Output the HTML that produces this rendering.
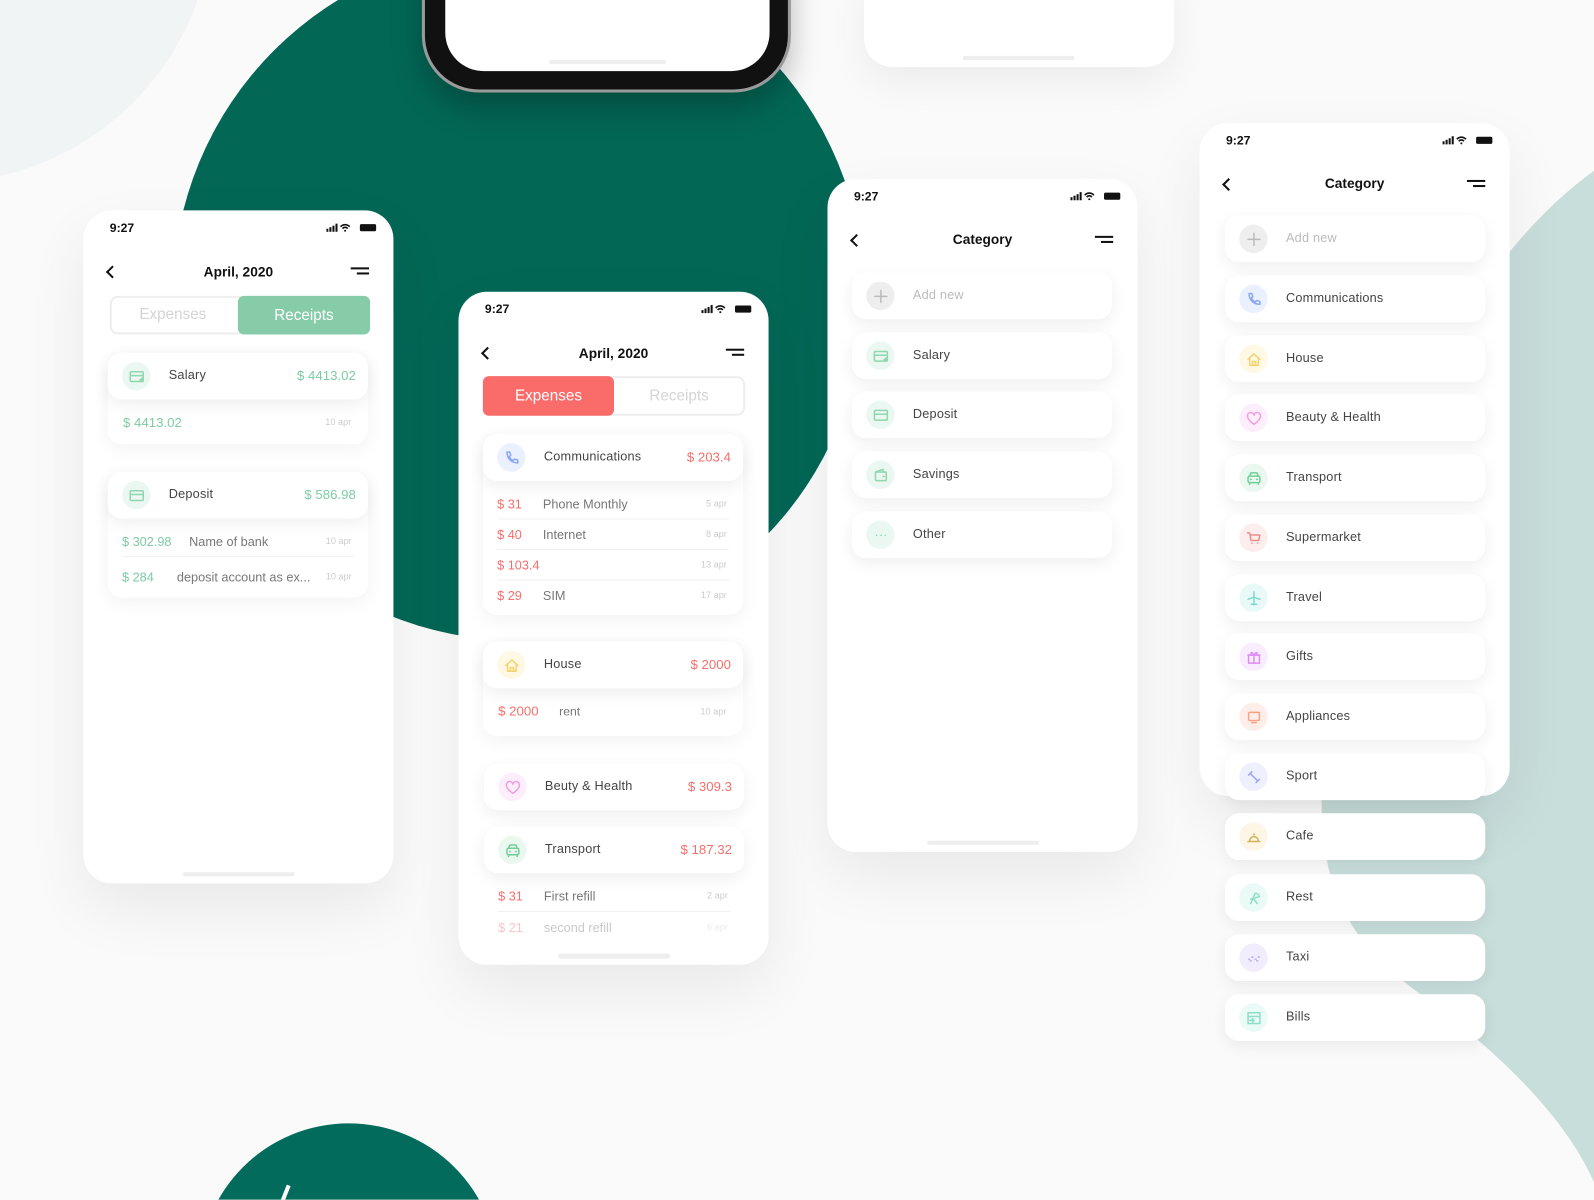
<!DOCTYPE html>
<html><head><meta charset="utf-8"><style>
*{margin:0;padding:0;box-sizing:border-box}
html,body{width:1594px;height:1200px;overflow:hidden;background:#fafafa}
#w{position:absolute;left:0;top:0;width:1568px;height:1180px;overflow:hidden;transform:scale(1.0166);transform-origin:0 0;font-family:"Liberation Sans",sans-serif;color:#444}
.a{position:absolute}
.ph{position:absolute;width:305px;height:662px;background:#fff;border-radius:28px;box-shadow:0 25px 60px rgba(0,0,0,.07)}
.tm{position:absolute;left:26px;top:10px;font-size:12px;font-weight:bold;color:#111}
.st{position:absolute;right:14px;top:12px}
.ttl{position:absolute;left:0;width:305px;text-align:center;font-size:13.5px;font-weight:bold;color:#111}
.bk{position:absolute;left:24px;width:9px;height:9px;border-left:2px solid #111;border-bottom:2px solid #111;transform:rotate(45deg)}
.mn{position:absolute;right:24px;width:18px;height:8px}
.mn:before{content:"";position:absolute;left:0;top:0;width:18px;height:2px;background:#111}
.mn:after{content:"";position:absolute;right:0;top:5px;width:12px;height:2px;background:#111}
.hb{position:absolute;left:98px;bottom:7px;width:110px;height:4px;border-radius:2px;background:#eee}
.cd{position:absolute;width:256px;height:46px;background:#fff;border-radius:14px;box-shadow:0 5px 16px rgba(0,0,0,.065)}
.box{position:absolute;width:256px;background:#fff;border-radius:14px;box-shadow:0 5px 18px rgba(0,0,0,.05)}
.ic{position:absolute;left:14px;top:9px;width:28px;height:28px;border-radius:50%;display:flex;align-items:center;justify-content:center}
.ic svg{width:17px;height:17px;fill:none;stroke-width:1.4;stroke-linecap:round;stroke-linejoin:round}
.lb{position:absolute;left:60px;top:15px;font-size:12.5px;color:#444;letter-spacing:.2px}
.am{position:absolute;right:12px;top:15px;font-size:13px}
.g{color:#7dcba3}.r{color:#f46f6c}
.row{position:absolute;left:14px;right:14px;height:30px;font-size:12.5px;border-bottom:1px solid #f0f0f0}
.row .v{position:absolute;left:0;top:8px}
.row .n{position:absolute;top:8px;color:#777}
.row .d{position:absolute;right:2px;top:9px;font-size:9px;color:#ccc}
</style></head><body><div id="w">
<svg class="a" style="left:0;top:0" width="1568" height="1180">
<circle cx="-60" cy="-90" r="270" fill="#f1f4f4"/>
<circle cx="510" cy="290" r="340" fill="#036756"/>
<path d="M1568,168 C1440,260 1320,480 1300,786 C1300,880 1330,930 1400,980 C1480,1040 1540,1100 1568,1163 Z" fill="#c8dedb"/>
<circle cx="343" cy="1252" r="147" fill="#036b5b"/>
<line x1="284" y1="1166" x2="278" y2="1181" stroke="#fff" stroke-width="4"/>
</svg>
<div class="a" style="left:415px;top:-40px;width:363px;height:131px;background:#111;border-radius:0 0 56px 56px;border:3px solid #9a9a9a;box-shadow:0 15px 30px rgba(0,0,0,.25)"></div>
<div class="a" style="left:438px;top:-20px;width:319px;height:90px;background:#fff;border-radius:0 0 38px 38px"></div>
<div class="a" style="left:540px;top:59px;width:115px;height:4px;background:#eee;border-radius:2px"></div>
<div class="a" style="left:850px;top:-30px;width:305px;height:96px;background:#fff;border-radius:0 0 28px 28px;box-shadow:0 15px 40px rgba(0,0,0,.06)"></div>
<div class="a" style="left:947px;top:55px;width:110px;height:4px;background:#eee;border-radius:2px"></div>

<div class="ph" style="left:82px;top:207px">
<div class="tm">9:27</div>
<svg class="st" width="52" height="10"><rect x="0" y="6" width="2" height="3" fill="#111"/><rect x="3" y="4.5" width="2" height="4.5" fill="#111"/><rect x="6" y="3" width="2" height="6" fill="#111"/><rect x="9" y="1" width="2" height="8" fill="#111"/><path d="M14 4a6 6 0 0 1 9 0M16 6a3 3 0 0 1 5 0" stroke="#111" stroke-width="1.6" fill="none"/><circle cx="18.5" cy="8" r="1" fill="#111"/><rect x="33" y="1.5" width="16" height="7" rx="1.5" fill="#111"/></svg>
<div class="bk" style="top:56px"></div><div class="ttl" style="top:53px">April, 2020</div><div class="mn" style="top:56px"></div>
<div class="a" style="left:26px;top:84px;width:256px;height:38px;border:2px solid #eee;border-radius:8px"></div>
<div class="a" style="left:27px;top:94px;width:122px;text-align:center;font-size:15px;color:#d4d4d4">Expenses</div>
<div class="a" style="left:152px;top:84px;width:130px;height:38px;background:#86cca9;border-radius:6px;color:#fff;font-size:15px;text-align:center;line-height:40px">Receipts</div>
<div class="hb"></div></div>
<div class="box" style="left:106px;top:347px;height:90px"></div>
<div class="cd" style="left:106px;top:347px"><div class="ic" style="background:#eaf8f1"><svg viewBox="0 0 16 16" stroke="#8fd6b1"><rect x="2" y="3.5" width="12" height="9" rx="1"/><path d="M2 7h12M11 11h3M12.5 9.5v3"/></svg></div><div class="lb">Salary</div><div class="am g">$ 4413.02</div></div>
<div class="a g" style="left:121px;top:408px;font-size:13px">$ 4413.02</div><div class="a" style="left:320px;top:410px;font-size:9px;color:#ccc">10 apr</div>
<div class="box" style="left:106px;top:464px;height:124px"></div>
<div class="cd" style="left:106px;top:464px"><div class="ic" style="background:#eaf8f1"><svg viewBox="0 0 16 16" stroke="#8fd6b1"><rect x="2" y="3.5" width="12" height="9" rx="1"/><path d="M2 7h12"/></svg></div><div class="lb">Deposit</div><div class="am g">$ 586.98</div></div>
<div class="row" style="left:120px;right:auto;width:228px;top:518px"><span class="v g">$ 302.98</span><span class="n" style="left:66px">Name of bank</span><span class="d">10 apr</span></div>
<div class="row" style="left:120px;right:auto;width:228px;top:553px;border:0"><span class="v g">$ 284</span><span class="n" style="left:54px">deposit account as ex...</span><span class="d">10 apr</span></div>

<div class="ph" style="left:451px;top:287px">
<div class="tm">9:27</div>
<svg class="st" width="52" height="10"><rect x="0" y="6" width="2" height="3" fill="#111"/><rect x="3" y="4.5" width="2" height="4.5" fill="#111"/><rect x="6" y="3" width="2" height="6" fill="#111"/><rect x="9" y="1" width="2" height="8" fill="#111"/><path d="M14 4a6 6 0 0 1 9 0M16 6a3 3 0 0 1 5 0" stroke="#111" stroke-width="1.6" fill="none"/><circle cx="18.5" cy="8" r="1" fill="#111"/><rect x="33" y="1.5" width="16" height="7" rx="1.5" fill="#111"/></svg>
<div class="bk" style="top:56px"></div><div class="ttl" style="top:53px">April, 2020</div><div class="mn" style="top:56px"></div>
<div class="a" style="left:24px;top:83px;width:258px;height:39px;border:2px solid #eee;border-radius:8px"></div>
<div class="a" style="left:152px;top:94px;width:130px;text-align:center;font-size:15px;color:#d4d4d4">Receipts</div>
<div class="a" style="left:24px;top:83px;width:129px;height:39px;background:#f96c6a;border-radius:6px;color:#fff;font-size:15px;text-align:center;line-height:39px">Expenses</div>
<div class="hb"></div></div>
<div class="box" style="left:475px;top:427px;height:178px"></div>
<div class="cd" style="left:475px;top:427px"><div class="ic" style="background:#eaf0fe"><svg viewBox="0 0 16 16" stroke="#8aa8f2"><path d="M3.5 2.5l2.5 0 1 3-1.5 1.3c.8 1.6 2 2.8 3.6 3.6L10.5 9l3 1v2.5c-6 0-10-4-10-10z"/></svg></div><div class="lb">Communications</div><div class="am r">$ 203.4</div></div>
<div class="row" style="left:489px;right:auto;width:228px;top:481px"><span class="v r">$ 31</span><span class="n" style="left:45px">Phone Monthly</span><span class="d">5 apr</span></div>
<div class="row" style="left:489px;right:auto;width:228px;top:511px"><span class="v r">$ 40</span><span class="n" style="left:45px">Internet</span><span class="d">8 apr</span></div>
<div class="row" style="left:489px;right:auto;width:228px;top:541px"><span class="v r">$ 103.4</span><span class="d">13 apr</span></div>
<div class="row" style="left:489px;right:auto;width:228px;top:571px;border:0"><span class="v r">$ 29</span><span class="n" style="left:45px">SIM</span><span class="d">17 apr</span></div>
<div class="box" style="left:475px;top:631px;height:93px"></div>
<div class="cd" style="left:475px;top:631px"><div class="ic" style="background:#fff8e4"><svg viewBox="0 0 16 16" stroke="#f5d36d"><path d="M2.5 8l5.5-5 5.5 5M4 7v6.5h8V7M6.5 13.5v-3.5h3v3.5"/></svg></div><div class="lb">House</div><div class="am r">$ 2000</div></div>
<div class="a r" style="left:490px;top:692px;font-size:13px">$ 2000</div><div class="a" style="left:550px;top:693px;font-size:12px;color:#777">rent</div><div class="a" style="left:689px;top:695px;font-size:9px;color:#ccc">10 apr</div>
<div class="cd" style="left:476px;top:751px"><div class="ic" style="background:#fdeefb"><svg viewBox="0 0 16 16" stroke="#f29ee2"><path d="M8 13.5S2 9.8 2 6a3 3 0 0 1 6-.8A3 3 0 0 1 14 6c0 3.8-6 7.5-6 7.5z"/></svg></div><div class="lb">Beuty &amp; Health</div><div class="am r">$ 309.3</div></div>
<div class="box" style="left:476px;top:813px;height:120px;border-radius:14px 14px 0 0;box-shadow:none"></div>
<div class="cd" style="left:476px;top:813px"><div class="ic" style="background:#ebf8f0"><svg viewBox="0 0 16 16" stroke="#6fcf97"><rect x="2.5" y="6" width="11" height="6" rx="1.5"/><path d="M4 6l1.2-3h5.6L12 6M4 13.5v-1.5M12 13.5v-1.5M5 9h.5M10.5 9h.5"/></svg></div><div class="lb">Transport</div><div class="am r">$ 187.32</div></div>
<div class="row" style="left:490px;right:auto;width:228px;top:867px"><span class="v r">$ 31</span><span class="n" style="left:45px">First refill</span><span class="d">2 apr</span></div>
<div class="row" style="left:490px;right:auto;width:228px;top:898px;border:0;opacity:.4"><span class="v r">$ 21</span><span class="n" style="left:45px">second refill</span><span class="d">6 apr</span></div>
<div class="a" style="left:549px;top:939px;width:110px;height:4px;border-radius:2px;background:#eee"></div>

<div class="ph" style="left:814px;top:176px">
<div class="tm">9:27</div>
<svg class="st" width="52" height="10"><rect x="0" y="6" width="2" height="3" fill="#111"/><rect x="3" y="4.5" width="2" height="4.5" fill="#111"/><rect x="6" y="3" width="2" height="6" fill="#111"/><rect x="9" y="1" width="2" height="8" fill="#111"/><path d="M14 4a6 6 0 0 1 9 0M16 6a3 3 0 0 1 5 0" stroke="#111" stroke-width="1.6" fill="none"/><circle cx="18.5" cy="8" r="1" fill="#111"/><rect x="33" y="1.5" width="16" height="7" rx="1.5" fill="#111"/></svg>
<div class="bk" style="top:56px"></div><div class="ttl" style="top:52px">Category</div><div class="mn" style="top:56px"></div>
<div class="hb"></div></div>
<div class="cd" style="left:838px;top:268px"><div class="ic" style="background:#eee"><svg viewBox="0 0 16 16" stroke="#bbb"><path d="M8 2.5v11M2.5 8h11"/></svg></div><div class="lb" style="color:#bbb">Add new</div></div>
<div class="cd" style="left:838px;top:327px"><div class="ic" style="background:#eaf8f1"><svg viewBox="0 0 16 16" stroke="#8fd6b1"><rect x="2" y="3.5" width="12" height="9" rx="1"/><path d="M2 7h12M11 11h3M12.5 9.5v3"/></svg></div><div class="lb">Salary</div></div>
<div class="cd" style="left:838px;top:385px"><div class="ic" style="background:#eaf8f1"><svg viewBox="0 0 16 16" stroke="#8fd6b1"><rect x="2" y="3.5" width="12" height="9" rx="1"/><path d="M2 7h12"/></svg></div><div class="lb">Deposit</div></div>
<div class="cd" style="left:838px;top:444px"><div class="ic" style="background:#eaf8f1"><svg viewBox="0 0 16 16" stroke="#8fd6b1"><rect x="3" y="5" width="10" height="8" rx="1"/><path d="M3 5l7-2.5V5M10 9h1"/></svg></div><div class="lb">Savings</div></div>
<div class="cd" style="left:838px;top:503px"><div class="ic" style="background:#eaf8f1"><svg viewBox="0 0 16 16" stroke="#8fd6b1" stroke-width="2"><path d="M4 8h.1M8 8h.1M12 8h.1"/></svg></div><div class="lb">Other</div></div>

<div class="ph" style="left:1180px;top:121px">
<div class="tm">9:27</div>
<svg class="st" width="52" height="10"><rect x="0" y="6" width="2" height="3" fill="#111"/><rect x="3" y="4.5" width="2" height="4.5" fill="#111"/><rect x="6" y="3" width="2" height="6" fill="#111"/><rect x="9" y="1" width="2" height="8" fill="#111"/><path d="M14 4a6 6 0 0 1 9 0M16 6a3 3 0 0 1 5 0" stroke="#111" stroke-width="1.6" fill="none"/><circle cx="18.5" cy="8" r="1" fill="#111"/><rect x="33" y="1.5" width="16" height="7" rx="1.5" fill="#111"/></svg>
<div class="bk" style="top:56px"></div><div class="ttl" style="top:52px">Category</div><div class="mn" style="top:56px"></div>
</div>
<div class="cd" style="left:1205px;top:212px"><div class="ic" style="background:#eee"><svg viewBox="0 0 16 16" stroke="#bbb"><path d="M8 2.5v11M2.5 8h11"/></svg></div><div class="lb" style="color:#bbb">Add new</div></div>
<div class="cd" style="left:1205px;top:271px"><div class="ic" style="background:#eaf0fe"><svg viewBox="0 0 16 16" stroke="#8aa8f2"><path d="M3.5 2.5l2.5 0 1 3-1.5 1.3c.8 1.6 2 2.8 3.6 3.6L10.5 9l3 1v2.5c-6 0-10-4-10-10z"/></svg></div><div class="lb">Communications</div></div>
<div class="cd" style="left:1205px;top:330px"><div class="ic" style="background:#fff8e4"><svg viewBox="0 0 16 16" stroke="#f5d36d"><path d="M2.5 8l5.5-5 5.5 5M4 7v6.5h8V7M6.5 13.5v-3.5h3v3.5"/></svg></div><div class="lb">House</div></div>
<div class="cd" style="left:1205px;top:388px"><div class="ic" style="background:#fdeefb"><svg viewBox="0 0 16 16" stroke="#f29ee2"><path d="M8 13.5S2 9.8 2 6a3 3 0 0 1 6-.8A3 3 0 0 1 14 6c0 3.8-6 7.5-6 7.5z"/></svg></div><div class="lb">Beauty &amp; Health</div></div>
<div class="cd" style="left:1205px;top:447px"><div class="ic" style="background:#ebf8f0"><svg viewBox="0 0 16 16" stroke="#6fcf97"><rect x="2.5" y="6" width="11" height="6" rx="1.5"/><path d="M4 6l1.2-3h5.6L12 6M4 13.5v-1.5M12 13.5v-1.5M5 9h.5M10.5 9h.5"/></svg></div><div class="lb">Transport</div></div>
<div class="cd" style="left:1205px;top:506px"><div class="ic" style="background:#fdeeee"><svg viewBox="0 0 16 16" stroke="#f28c8c"><path d="M2 3h2l1.3 7h7l1.2-5H5M6 12.5h.1M11.5 12.5h.1"/></svg></div><div class="lb">Supermarket</div></div>
<div class="cd" style="left:1205px;top:565px"><div class="ic" style="background:#e9f9f8"><svg viewBox="0 0 16 16" stroke="#7fd8cf"><path d="M8 2v12M2.5 9L8 7l5.5 2M5.5 13.5h5"/></svg></div><div class="lb">Travel</div></div>
<div class="cd" style="left:1205px;top:623px"><div class="ic" style="background:#f8ecfd"><svg viewBox="0 0 16 16" stroke="#df8df5"><rect x="3" y="6" width="10" height="7.5"/><path d="M2.5 6h11M8 6v7.5M8 6C6 2 4 4 6 6M8 6c2-4 4-2 2 0"/></svg></div><div class="lb">Gifts</div></div>
<div class="cd" style="left:1205px;top:682px"><div class="ic" style="background:#fdeee9"><svg viewBox="0 0 16 16" stroke="#f5a385"><rect x="3" y="3.5" width="10" height="7.5" rx="1"/><path d="M6 13h4"/></svg></div><div class="lb">Appliances</div></div>
<div class="cd" style="left:1205px;top:741px"><div class="ic" style="background:#eef0fe"><svg viewBox="0 0 16 16" stroke="#9ea7f3"><path d="M4.5 4.5l7 7M3 6l3-3M10 13l3-3"/></svg></div><div class="lb">Sport</div></div>
<div class="cd" style="left:1205px;top:800px"><div class="ic" style="background:#fdf6e6"><svg viewBox="0 0 16 16" stroke="#d3b358"><path d="M2.5 12h11M4 11.5a4 4 0 0 1 8 0M8 6V5"/></svg></div><div class="lb">Cafe</div></div>
<div class="cd" style="left:1205px;top:860px"><div class="ic" style="background:#eafaf6"><svg viewBox="0 0 16 16" stroke="#8edfc9"><path d="M5 13L9 3.5a4 4 0 0 1 4 3L5 9M8 9l3 4"/></svg></div><div class="lb">Rest</div></div>
<div class="cd" style="left:1205px;top:919px"><div class="ic" style="background:#f1edfd"><svg viewBox="0 0 16 16" stroke="#c2b0f5" stroke-width="2"><path d="M3 9h1M6 7h1M9 9h1M12 7h1M4.5 10.5h1M10.5 10.5h1"/></svg></div><div class="lb">Taxi</div></div>
<div class="cd" style="left:1205px;top:978px"><div class="ic" style="background:#eafaf6"><svg viewBox="0 0 16 16" stroke="#8edfc9"><rect x="2.5" y="3" width="11" height="10"/><path d="M2.5 6.5h11M4 10h4M6.5 8.5L8 10l-1.5 1.5"/></svg></div><div class="lb">Bills</div></div>
</div></body></html>
